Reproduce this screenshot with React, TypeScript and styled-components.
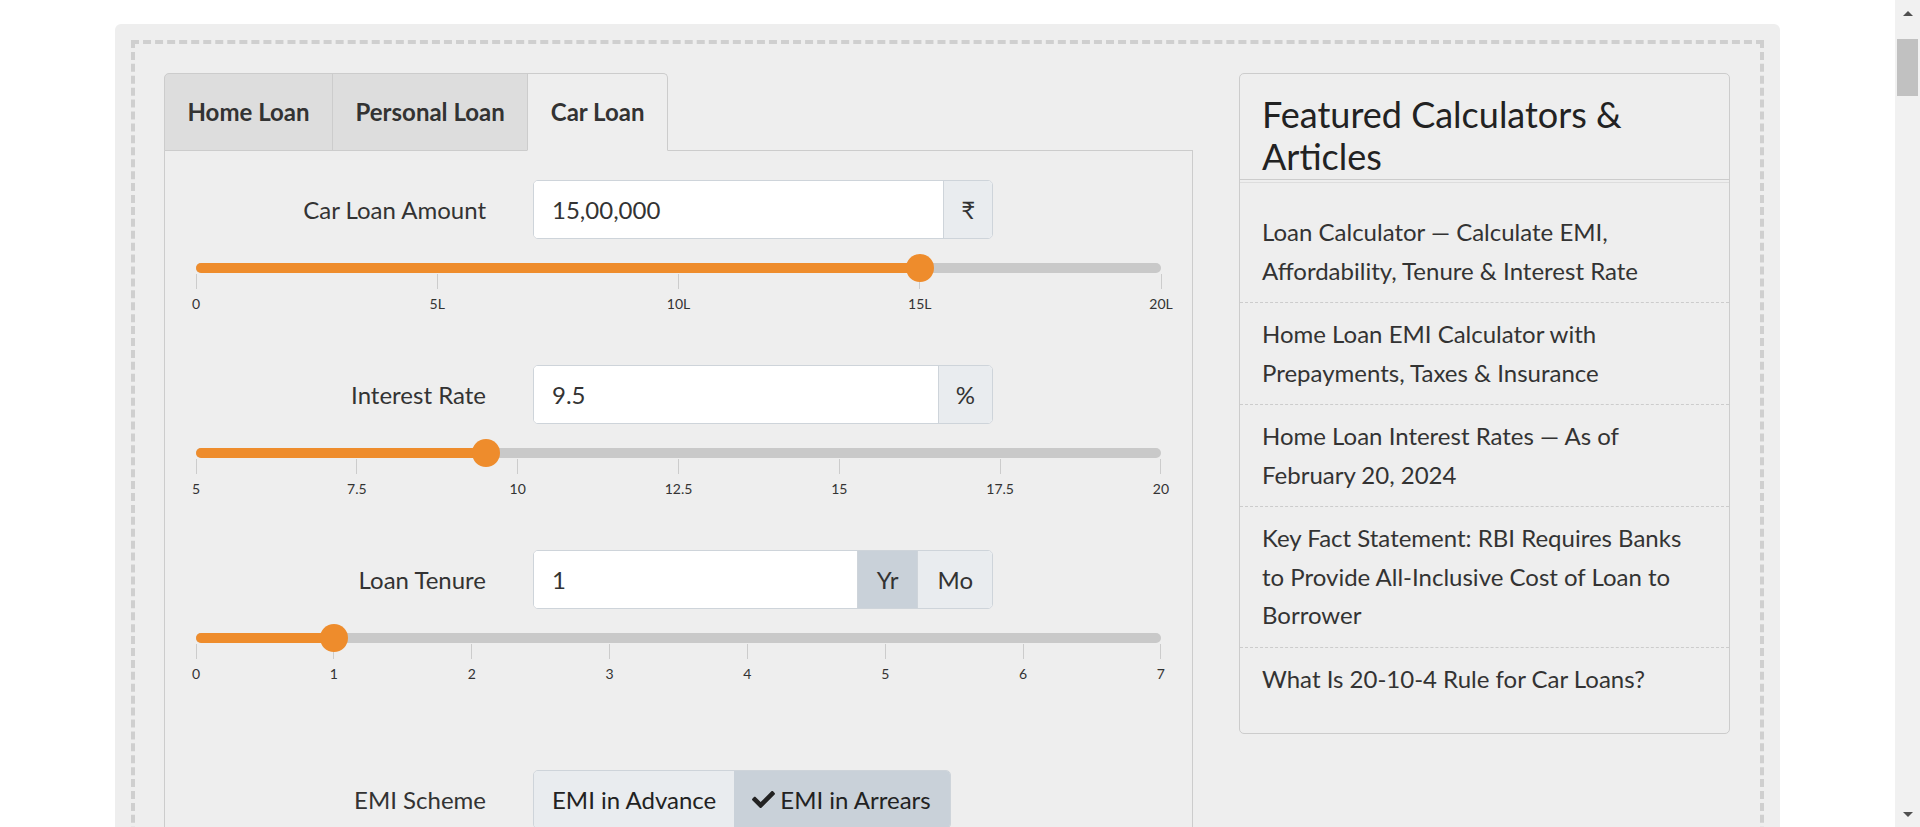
import styled, { createGlobalStyle } from 'styled-components';
import { FaCheck } from 'react-icons/fa';

type Field = {
  label: string;
  value: string;
  units: { text: string; active?: boolean }[];
  min: number;
  max: number;
  current: number;
  ticks: string[];
};

const fields: Field[] = [
  {
    label: 'Car Loan Amount',
    value: '15,00,000',
    units: [{ text: '₹' }],
    min: 0,
    max: 20,
    current: 15,
    ticks: ['0', '5L', '10L', '15L', '20L'],
  },
  {
    label: 'Interest Rate',
    value: '9.5',
    units: [{ text: '%' }],
    min: 5,
    max: 20,
    current: 9.5,
    ticks: ['5', '7.5', '10', '12.5', '15', '17.5', '20'],
  },
  {
    label: 'Loan Tenure',
    value: '1',
    units: [{ text: 'Yr', active: true }, { text: 'Mo' }],
    min: 0,
    max: 7,
    current: 1,
    ticks: ['0', '1', '2', '3', '4', '5', '6', '7'],
  },
];

const articles = [
  'Loan Calculator — Calculate EMI, Affordability, Tenure & Interest Rate',
  'Home Loan EMI Calculator with Prepayments, Taxes & Insurance',
  'Home Loan Interest Rates — As of February 20, 2024',
  'Key Fact Statement: RBI Requires Banks to Provide All-Inclusive Cost of Loan to Borrower',
  'What Is 20-10-4 Rule for Car Loans?',
];

const tabs = ['Home Loan', 'Personal Loan', 'Car Loan'];

const App = () => {
  return (
    <Page>
      <GlobalStyle />
      <Container>
        <Frame>
          <Columns>
            <div>
              <TabList>
                {tabs.map((t, i) => (
                  <Tab
                    key={t}
                    $active={t === 'Car Loan'}
                    $first={i === 0}
                    $last={i === tabs.length - 1}
                  >
                    {t}
                  </Tab>
                ))}
              </TabList>
              <Panel>
                {fields.map((f) => {
                  const pct = ((f.current - f.min) / (f.max - f.min)) * 100;
                  return (
                    <FieldBlock key={f.label}>
                      <FieldRow>
                        <Label>{f.label}</Label>
                        <InputGroup>
                          <ValueInput defaultValue={f.value} />
                          {f.units.map((u) => (
                            <Addon key={u.text} $active={u.active} $wide={f.units.length > 1}>
                              {u.text}
                            </Addon>
                          ))}
                        </InputGroup>
                      </FieldRow>
                      <Slider>
                        <Track>
                          <Fill style={{ width: `${pct}%` }} />
                          <Thumb style={{ left: `${pct}%` }} />
                        </Track>
                        <Scale>
                          {f.ticks.map((t) => (
                            <Tick key={t}>
                              <TickLine />
                              <TickLabel>{t}</TickLabel>
                            </Tick>
                          ))}
                        </Scale>
                      </Slider>
                    </FieldBlock>
                  );
                })}
                <SchemeRow>
                  <Label>EMI Scheme</Label>
                  <ButtonGroup>
                    <SchemeButton>EMI in Advance</SchemeButton>
                    <SchemeButton $active>
                      <FaCheck size={23} />
                      EMI in Arrears
                    </SchemeButton>
                  </ButtonGroup>
                </SchemeRow>
              </Panel>
            </div>

            <Sidebar>
              <SidebarTitle>Featured Calculators &amp; Articles</SidebarTitle>
              <ArticleList>
                {articles.map((a) => (
                  <ArticleItem key={a}>{a}</ArticleItem>
                ))}
              </ArticleList>
            </Sidebar>
          </Columns>
        </Frame>
      </Container>

      {/* window scrollbar as it shows in the screenshot */}
      <ScrollBar>
        <ArrowButton>
          <ArrowUp />
        </ArrowButton>
        <ScrollThumb />
        <ScrollSpace />
        <ArrowButton>
          <ArrowDown />
        </ArrowButton>
      </ScrollBar>
    </Page>
  );
};

const GlobalStyle = createGlobalStyle`
  html, body {
    margin: 0;
    padding: 0;
  }
  body {
    background: #fff;
    font-family: Lato, "Open Sans", sans-serif;
    color: #333;
  }
  ::-webkit-scrollbar {
    display: none;
  }
`;

// Styled components
const Page = styled.div`
  min-height: 11000px;
  padding-top: 24px;
`;

const Container = styled.div`
  width: 1665px;
  margin-left: 115px;
  padding: 16px;
  box-sizing: border-box;
  background: #eee;
  border-radius: 6px;
`;

const Frame = styled.div`
  border: 4px dashed #cfcfcf;
  padding: 29px 30px 60px 29px;
`;

const Columns = styled.div`
  display: grid;
  grid-template-columns: 1029px 491px;
  column-gap: 46px;
  align-items: start;
`;

const TabList = styled.div`
  display: flex;
  border-bottom: 1px solid #ccc;
`;

const Tab = styled.div<{ $active?: boolean; $first?: boolean; $last?: boolean }>`
  padding: 20px 22.5px;
  margin-bottom: -1px;
  margin-left: ${(p) => (p.$first ? '0' : '-1px')};
  font-size: 24px;
  line-height: 36px;
  font-weight: 700;
  color: #333;
  background: ${(p) => (p.$active ? '#eee' : '#ddd')};
  border: 1px solid #ccc;
  border-bottom-color: ${(p) => (p.$active ? '#eee' : '#ccc')};
  border-top-left-radius: ${(p) => (p.$first ? '5px' : '0')};
  border-top-right-radius: ${(p) => (p.$last ? '5px' : '0')};
  cursor: pointer;
`;

const Panel = styled.div`
  border: 1px solid #ccc;
  border-top: none;
  padding: 29px 31px 60px;
`;

const FieldBlock = styled.div`
  margin-bottom: 51px;
`;

const FieldRow = styled.div`
  display: grid;
  grid-template-columns: 290px 460px;
  column-gap: 47px;
  align-items: center;
`;

const Label = styled.label`
  text-align: right;
  font-size: 24px;
  color: #333;
`;

const InputGroup = styled.div`
  display: flex;
  height: 59px;
  box-sizing: border-box;
  border: 1px solid #ced4da;
  border-radius: 5px;
  overflow: hidden;
  background: #fff;
`;

const ValueInput = styled.input`
  flex: 1;
  min-width: 0;
  border: none;
  outline: none;
  padding: 0 18px;
  font-family: Lato, "Open Sans", sans-serif;
  font-size: 24px;
  color: #333;
  background: #fff;
`;

const Addon = styled.span<{ $active?: boolean; $wide?: boolean }>`
  display: flex;
  align-items: center;
  padding: 0 ${(p) => (p.$wide ? '19px' : '17px')};
  border-left: 1px solid #ced4da;
  background: ${(p) => (p.$active ? '#c9d1d9' : '#e9ecef')};
  font-size: 24px;
  color: #333;
`;

const Slider = styled.div`
  margin-top: 24px;
`;

const Track = styled.div`
  position: relative;
  height: 10px;
  border-radius: 5px;
  background: #c9c9c9;
`;

const Fill = styled.div`
  height: 100%;
  border-radius: 5px;
  background: #ee8c2c;
`;

const Thumb = styled.div`
  position: absolute;
  top: 50%;
  width: 28px;
  height: 28px;
  border-radius: 50%;
  background: #ee8c2c;
  transform: translate(-50%, -50%);
`;

const Scale = styled.div`
  display: flex;
  justify-content: space-between;
  margin-top: 1px;
`;

const Tick = styled.div`
  width: 0;
  display: flex;
  flex-direction: column;
  align-items: center;
`;

const TickLine = styled.div`
  width: 1px;
  height: 15px;
  background: #ccc;
`;

const TickLabel = styled.span`
  margin-top: 5px;
  font-size: 14px;
  line-height: 20px;
  white-space: nowrap;
  color: #333;
`;

const SchemeRow = styled(FieldRow)`
  margin-top: 86px;
`;

const ButtonGroup = styled.div`
  display: flex;
  justify-self: start;
  height: 59px;
  box-sizing: border-box;
  border: 1px solid #ced4da;
  border-radius: 5px;
  overflow: hidden;
`;

const SchemeButton = styled.button<{ $active?: boolean }>`
  display: flex;
  align-items: center;
  gap: 5px;
  padding: 0 ${(p) => (p.$active ? '19px 0 18px' : '18px')};
  border: none;
  background: ${(p) => (p.$active ? '#c9d1d9' : '#e9ecef')};
  font-family: Lato, "Open Sans", sans-serif;
  font-size: 24px;
  color: #222;
  cursor: pointer;
`;

const Sidebar = styled.aside`
  border: 1px solid #ccc;
  border-radius: 5px;
`;

const SidebarTitle = styled.h3`
  margin: 0;
  padding: 20px 30px 2px 22px;
  font-size: 36px;
  line-height: 41.5px;
  font-weight: 400;
  color: #222;
  border-bottom: 1px solid #ccc;
`;

const ArticleList = styled.ul`
  list-style: none;
  margin: 2px 0 0;
  padding: 18px 0 23px;
  border-top: 1px solid #ddd;
`;

const ArticleItem = styled.li`
  padding: 12px 30px 12px 22px;
  font-size: 24px;
  line-height: 38.5px;
  color: #333;
  border-bottom: 1px dashed #ccc;

  &:last-child {
    border-bottom: none;
  }
`;

const ScrollBar = styled.div`
  position: fixed;
  top: 0;
  right: 0;
  width: 25px;
  height: 100vh;
  display: flex;
  flex-direction: column;
  background: #f1f1f1;
`;

const ArrowButton = styled.div`
  height: 26px;
  display: flex;
  align-items: center;
  justify-content: center;
`;

const ArrowUp = styled.div`
  width: 0;
  height: 0;
  border-left: 5px solid transparent;
  border-right: 5px solid transparent;
  border-bottom: 5px solid #505050;
`;

const ArrowDown = styled(ArrowUp)`
  border-bottom: none;
  border-top: 5px solid #505050;
`;

const ScrollThumb = styled.div`
  height: 57px;
  margin: 13px 2px 0;
  background: #c1c1c1;
`;

const ScrollSpace = styled.div`
  flex: 1;
`;

export default App;
